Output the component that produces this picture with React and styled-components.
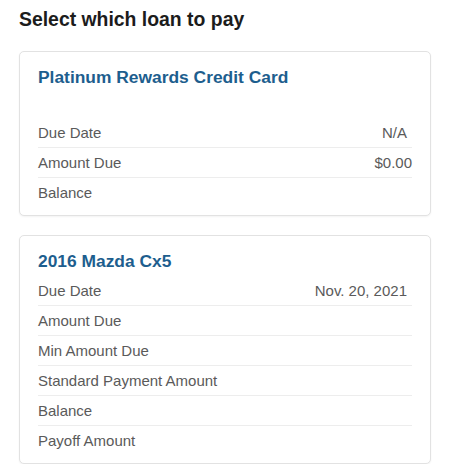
import React from 'react';
import styled, { createGlobalStyle } from 'styled-components';

const GlobalStyle = createGlobalStyle`
  body {
    margin: 0;
    background: #ffffff;
    font-family: 'Liberation Sans', Arial, sans-serif;
  }
`;

const Page = styled.div`
  padding: 7px 19px 0;
  display: flex;
  flex-direction: column;
`;

const Title = styled.h1`
  margin: 0 0 20px;
  font-size: 19.4px;
  line-height: 24px;
  font-weight: 700;
  color: #1c1c1c;
`;

const CardList = styled.div`
  display: flex;
  flex-direction: column;
  gap: 19px;
`;

const Card = styled.div`
  background: #fff;
  border: 1px solid #e2e2e2;
  border-radius: 5px;
  box-shadow: 0 1px 2px rgba(0, 0, 0, 0.05);
  padding: 15px 18px 7px;
`;

const CardTitle = styled.h2`
  margin: 0;
  font-size: 17.4px;
  line-height: 20px;
  font-weight: 700;
  color: #1d5e8e;
`;

const Spacer = styled.div`
  height: ${(props) => props.size}px;
`;

const Row = styled.div`
  display: flex;
  align-items: center;
  justify-content: space-between;
  height: 30px;
  font-size: 15px;
  color: #5a5a5a;
  border-bottom: 1px solid ${(props) => (props.last ? 'transparent' : '#ededed')};
  box-sizing: border-box;
`;

const Value = styled.span`
  padding-right: ${(props) => props.inset || 0}px;
`;

const loans = [
  {
    name: 'Platinum Rewards Credit Card',
    gap: 31,
    rows: [
      { label: 'Due Date', value: 'N/A', inset: 5 },
      { label: 'Amount Due', value: '$0.00' },
      { label: 'Balance' },
    ],
  },
  {
    name: '2016 Mazda Cx5',
    gap: 5,
    rows: [
      { label: 'Due Date', value: 'Nov. 20, 2021', inset: 5 },
      { label: 'Amount Due' },
      { label: 'Min Amount Due' },
      { label: 'Standard Payment Amount' },
      { label: 'Balance' },
      { label: 'Payoff Amount' },
    ],
  },
];

const App = () => {
  return (
    <Page>
      <GlobalStyle />
      <Title>Select which loan to pay</Title>
      <CardList>
        {loans.map((loan) => (
          <Card key={loan.name}>
            <CardTitle>{loan.name}</CardTitle>
            <Spacer size={loan.gap} />
            {loan.rows.map((row, i) => (
              <Row key={row.label} last={i === loan.rows.length - 1}>
                <span>{row.label}</span>
                {row.value && <Value inset={row.inset}>{row.value}</Value>}
              </Row>
            ))}
          </Card>
        ))}
      </CardList>
    </Page>
  );
};

export default App;
